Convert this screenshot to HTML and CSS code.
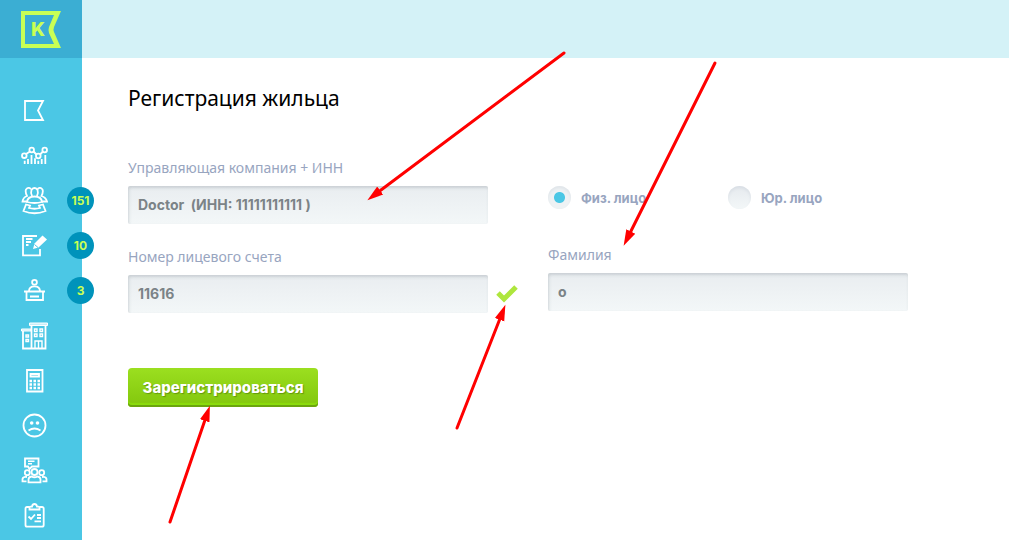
FILE: index.html
```html
<!DOCTYPE html>
<html lang="ru">
<head>
    <meta charset="UTF-8">
    <meta name="viewport" content="width=device-width, initial-scale=1.0">
    <title>Регистрация жильца</title>
    <link rel="stylesheet" href="styles.css">
</head>
<body>
    <aside class="sidebar">
        <a class="logo" href="#" aria-label="Главная">
            <svg width="40" height="37" viewBox="0 0 40 37">
                <path fill="#c8ff55" fill-rule="evenodd" d="M0 0H40L33 16Q32 19 33 21L40 37H0ZM4 4V33H33L28 22Q27 19 28 16L33 4Z"/>
                <text x="10" y="25" class="logo-letter">K</text>
            </svg>
        </a>
        <nav class="menu">
            <a href="#" aria-label="Объекты">
                <svg viewBox="0 0 28 28"><path d="M5 4H23L18 13.500L23 23H5Z"/></svg>
            </a>
            <a href="#" aria-label="Статистика">
                <svg viewBox="0 0 28 28">
                    <path d="M6 12L10 9.500M13.500 9.500L16.500 12.500M20 12.500L23 9.500"/>
                    <circle cx="4.300" cy="13.700" r="2.300"/><circle cx="11.700" cy="8" r="2.300"/>
                    <circle cx="18.300" cy="14" r="2.300"/><circle cx="24.700" cy="8" r="2.300"/>
                    <path d="M4.700 22V18.700M8 22V17M11.500 22V13M15 22V16.300M18.300 22V18.700M21.700 22V17M25.300 22V13"/>
                </svg>
            </a>
            <a href="#" aria-label="Жильцы">
                <svg viewBox="0 0 28 28">
                    <path d="M7 14.500H2.500Q3 10.500 7 9Q5 5 6 2.500Q8.500-.5 11 2M17.500 2Q20-.5 22.500 2.500Q23.500 5 21.500 9Q26 10.500 27 14.500H22"/>
                    <path d="M12 9Q10.500 5.500 11.500 2.800Q14.500-.8 17.500 2.800Q18.500 5.500 17 9M7 15Q7.500 9.500 14.500 9.500Q21.500 9.500 22 15Q14.500 17 7 15Z"/>
                    <path d="M6 17.500L3.500 24Q14.500 28.500 25.500 24L23 17.500L19 18.500L20 21Q14.500 22.500 9 21L10 18.500Z"/>
                </svg>
                <span class="badge">151</span>
            </a>
            <a href="#" aria-label="Заявки">
                <svg viewBox="0 0 28 28">
                    <path d="M17 4H3V23.300H20V17"/>
                    <path d="M6 7H12.500M6 10H11M6 13H8.500"/>
                    <path class="solid" d="M13 17L14.500 11.500L22.500 3.500L27 7.500L18.500 15.500Z"/>
                    <path class="cut" d="M14.500 12.500L18 15.500"/>
                </svg>
                <span class="badge">10</span>
            </a>
            <a href="#" aria-label="Приёмная">
                <svg viewBox="0 0 28 28">
                    <circle cx="14.500" cy="5.300" r="2.400"/>
                    <path d="M9 14Q9 9.300 14.500 9.300Q20 9.300 20 14M4 14.500H25M6.500 15V23H23V15M10 19.500H19"/>
                </svg>
                <span class="badge">3</span>
            </a>
            <a href="#" aria-label="Дома">
                <svg viewBox="0 0 28 28">
                    <path class="roof" d="M9.500 1H27.500V3.500H9.500ZM1.500 7H11V9H1.500Z"/>
                    <path d="M11.500 4V26.500H25.500V4M3 9V26.500H26"/>
                    <path class="fine" d="M14.500 7H17V9.500H14.500ZM20 7H22.500V9.500H20ZM14.500 12H17V14.500H14.500ZM20 12H22.500V14.500H20ZM6 13H8.500V15H6ZM6 17.500H8.500V19.500H6ZM15 26V19H22V26M18.500 19V26"/>
                </svg>
            </a>
            <a href="#" aria-label="Калькулятор">
                <svg viewBox="0 0 28 28">
                    <path d="M7 3H22.500V24.500H7ZM10.500 7H19V9.500H10.500Z"/>
                    <path class="keys" d="M9.500 14H20M9.500 17.500H20M9.500 21H20"/>
                </svg>
            </a>
            <a href="#" aria-label="Жалобы">
                <svg viewBox="0 0 28 28">
                    <circle cx="14.500" cy="13.500" r="11"/>
                    <path d="M8.500 18.500Q14.500 14.500 20.500 18.500"/>
                    <circle class="solid" cx="11.700" cy="11" r="1.800"/><circle class="solid" cx="17.500" cy="11" r="1.800"/>
                </svg>
            </a>
            <a href="#" aria-label="Собрания">
                <svg viewBox="0 0 28 28">
                    <path d="M5 1.500H18.500V9.500H12L9.500 12L8 9.500H5Z"/>
                    <path class="fine" d="M8 4.300H14.500M8 6.800H12"/>
                    <circle cx="7.300" cy="15.700" r="2.500"/><circle cx="14.500" cy="15" r="3"/><circle cx="21.700" cy="15.700" r="2.500"/>
                    <path d="M8.500 25.300V22.500Q8.500 20 11.500 19.500Q14.500 21 17.500 19.500Q20.500 20 20.500 22.500V25.300ZM6.500 24.300H2.500V22Q3 19.500 7 20M22.500 24.300H26.500V22Q26 19.500 22 20"/>
                </svg>
            </a>
            <a href="#" aria-label="Задачи">
                <svg viewBox="0 0 28 28">
                    <path d="M9 5H7Q5.500 5 5.500 6.500V23Q5.500 24.700 7 24.700H22Q23.700 24.700 23.700 23V6.500Q23.700 5 22 5H20"/>
                    <path d="M9.500 7.500V5.500Q9.500 4.500 12 4.500Q12.500 2 14.500 2Q16.500 2 17 4.500Q19.500 4.500 19.500 5.500V7.500Z"/>
                    <path d="M8.500 14.500L11 17L15 12.500M17 13H21M17 16H21M14.500 19.300H21"/>
                </svg>
            </a>
        </nav>
    </aside>

    <div class="page">
        <header class="topbar"></header>
        <main class="content">
            <h1>Регистрация жильца</h1>
            <form class="form">
                <div class="column">
                    <div class="field">
                        <label for="company">Управляющая компания + ИНН</label>
                        <input type="text" id="company" value="Doctor  (ИНН: 11111111111 )">
                    </div>
                    <div class="field">
                        <label for="account">Номер лицевого счета</label>
                        <div class="control">
                            <input type="text" id="account" value="11616">
                            <svg class="valid" width="24" height="18" viewBox="0 0 24 18">
                                <path d="M3 8L9 14L21 2"/>
                            </svg>
                        </div>
                    </div>
                    <button type="button" class="submit">Зарегистрироваться</button>
                </div>
                <div class="column">
                    <div class="radios">
                        <label><input type="radio" name="person" checked>Физ. лицо</label>
                        <label><input type="radio" name="person">Юр. лицо</label>
                    </div>
                    <div class="field">
                        <label for="surname">Фамилия</label>
                        <input type="text" id="surname" value="о">
                    </div>
                </div>
            </form>
        </main>
    </div>

    <!-- Arrows pointing at the steps of the form -->
    <svg class="arrows" width="1" height="1">
        <defs>
            <marker id="head" markerUnits="userSpaceOnUse" markerWidth="20" markerHeight="12" refX="4" refY="6" orient="auto">
                <path d="M0 1L16 6L0 11Z" fill="#f00"/>
            </marker>
        </defs>
        <path d="M564 53L377 193"/>
        <path d="M715 63L629 235"/>
        <path d="M457 428L501 316"/>
        <path d="M170 522L206 417"/>
    </svg>
</body>
</html>
```
FILE: styles.css
```css
* {
    box-sizing: border-box;
}

body {
    margin: 0;
    display: flex;
    min-height: 100vh;
    background: #fff;
    font-family: "Noto Sans", "Open Sans", sans-serif;
    color: #000;
}

/* Sidebar */
.sidebar {
    flex: 0 0 82px;
    background: #4bc7e5;
}

.logo {
    display: flex;
    align-items: center;
    justify-content: center;
    height: 58px;
    background: #3baed3;
}

.logo-letter {
    font: 800 19px "Inter", sans-serif;
    fill: #c8ff55;
}

.menu {
    padding-top: 30px;
}

.menu a {
    position: relative;
    display: block;
    height: 45px;
    padding: 9px 20px 8px;
}

.menu svg {
    display: block;
    width: 28px;
    height: 28px;
    fill: none;
    stroke: #fff;
    stroke-width: 1.8;
}

.menu .solid {
    fill: #fff;
    stroke: none;
}

.menu .roof {
    fill: #c9eef8;
    stroke-width: 1;
}

.menu .fine {
    stroke-width: 1.4;
}

.menu .cut {
    stroke: #4bc7e5;
    stroke-width: 1;
}

.menu .keys {
    stroke-width: 2.4;
    stroke-dasharray: 2.5 1.5;
}

.badge {
    position: absolute;
    top: 9px;
    right: -12px;
    width: 27px;
    height: 27px;
    border-radius: 50%;
    background: #0093bb;
    color: #c8ff55;
    font: 700 12px/27px "Inter", sans-serif;
    text-align: center;
}

/* Page */
.page {
    flex: 1;
    min-width: 0;
}

.topbar {
    height: 58px;
    background: #d4f2f7;
}

.content {
    padding: 24px 46px;
}

h1 {
    margin: 0 0 42px;
    font-size: 21px;
    line-height: 32px;
    font-weight: 400;
}

.form {
    display: grid;
    grid-template-columns: repeat(2, minmax(0, 360px));
    gap: 60px;
}

.field {
    margin-bottom: 21px;
}

.field label {
    display: block;
    margin-bottom: 6px;
    font-size: 14px;
    line-height: 24px;
    color: #98a5bf;
}

.control {
    position: relative;
}

input[type="text"] {
    display: block;
    width: 100%;
    height: 38px;
    padding: 0 10px 1px;
    border: 0;
    border-radius: 2px;
    background: linear-gradient(#e9edf0, #f3f7f8);
    box-shadow: inset 1px 2px 3px rgba(90, 105, 115, 0.22);
    font: 700 14px "Inter", sans-serif;
    color: #7b8387;
    white-space: pre;
}

.valid {
    position: absolute;
    top: 10px;
    left: calc(100% + 7px);
    fill: none;
    stroke: #aee63d;
    stroke-width: 5;
}

.submit {
    margin-top: 34px;
    width: 190px;
    height: 39px;
    padding: 0;
    border: 0;
    border-radius: 4px;
    background: linear-gradient(#9bdf20, #82c60c);
    box-shadow: inset 0 -2px 0 #6ba50d, inset 0 -4px 1px #8bdc0c;
    font: 800 15px "Inter", sans-serif;
    color: #fff;
    text-shadow: 1px 1px 1px rgba(60, 100, 0, 0.5);
    cursor: pointer;
}

.radios {
    display: grid;
    grid-template-columns: 1fr 1fr;
    margin: 30px 0 34px;
}

.radios label {
    display: flex;
    align-items: center;
    height: 23px;
    font: 700 13px "Inter", sans-serif;
    color: #98a5bf;
}

input[type="radio"] {
    appearance: none;
    flex: none;
    width: 23px;
    height: 23px;
    margin: 0 10px 0 0;
    border-radius: 50%;
    background: linear-gradient(#e6eaee, #f3f7f8);
    box-shadow: inset 0 2px 3px rgba(90, 105, 140, 0.1);
}

input[type="radio"]:checked {
    background: radial-gradient(circle, #4bc7e5 5px, #eef2f4 6px);
}

.arrows {
    position: absolute;
    top: 0;
    left: 0;
    overflow: visible;
    pointer-events: none;
}

.arrows > path {
    stroke: #f00;
    stroke-width: 3;
    stroke-linecap: round;
    marker-end: url(#head);
}
```
